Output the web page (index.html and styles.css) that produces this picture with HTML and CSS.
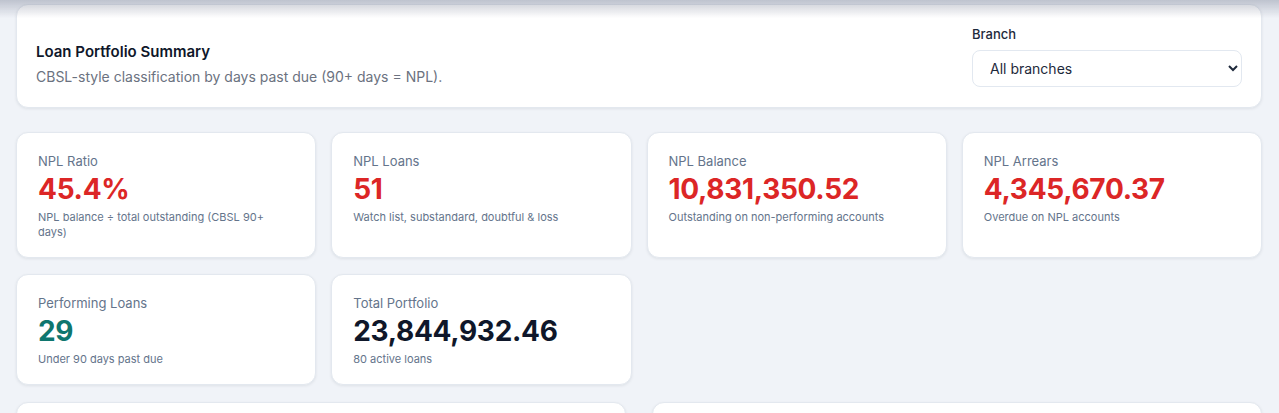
FILE: index.html
```html
<!DOCTYPE html>
<html lang="en">
<head>
    <meta charset="UTF-8">
    <meta name="viewport" content="width=device-width, initial-scale=1.0">
    <title>Loan Portfolio Summary</title>
    <link rel="stylesheet" href="styles.css">
</head>
<body>
    <!-- shadow cast by the sticky app header above the scrolled page -->
    <div class="header-shadow"></div>

    <main class="page">
        <section class="panel summary-head">
            <div class="summary-text">
                <h1>Loan Portfolio Summary</h1>
                <p>CBSL-style classification by days past due (90+ days = NPL).</p>
            </div>
            <div class="branch-filter">
                <label for="branch">Branch</label>
                <select id="branch">
                    <option>All branches</option>
                    <option>Colombo</option>
                    <option>Kandy</option>
                    <option>Galle</option>
                </select>
            </div>
        </section>

        <section class="stats">
            <div class="panel stat">
                <div class="stat-label">NPL Ratio</div>
                <div class="stat-value red">45.4%</div>
                <div class="stat-note">NPL balance ÷ total outstanding (CBSL 90+ days)</div>
            </div>
            <div class="panel stat">
                <div class="stat-label">NPL Loans</div>
                <div class="stat-value red">51</div>
                <div class="stat-note">Watch list, substandard, doubtful &amp; loss</div>
            </div>
            <div class="panel stat">
                <div class="stat-label">NPL Balance</div>
                <div class="stat-value red">10,831,350.52</div>
                <div class="stat-note">Outstanding on non-performing accounts</div>
            </div>
            <div class="panel stat">
                <div class="stat-label">NPL Arrears</div>
                <div class="stat-value red">4,345,670.37</div>
                <div class="stat-note">Overdue on NPL accounts</div>
            </div>
            <div class="panel stat">
                <div class="stat-label">Performing Loans</div>
                <div class="stat-value green">29</div>
                <div class="stat-note">Under 90 days past due</div>
            </div>
            <div class="panel stat">
                <div class="stat-label">Total Portfolio</div>
                <div class="stat-value">23,844,932.46</div>
                <div class="stat-note">80 active loans</div>
            </div>
        </section>

        <section class="charts">
            <div class="panel chart"></div>
            <div class="panel chart"></div>
        </section>
    </main>
</body>
</html>
```

FILE: styles.css
```css
body {
    margin: 0;
    font-family: Inter, "Noto Sans", Arial, sans-serif;
    background-color: #f0f3f8;
    color: #0f172a;
}

.header-shadow {
    position: fixed;
    top: 0;
    left: 0;
    right: 0;
    height: 18px;
    background: linear-gradient(to bottom, rgba(110, 118, 140, 0.38), rgba(110, 118, 140, 0));
    pointer-events: none;
    z-index: 10;
}

.page {
    padding: 4px 17px 16px 16px;
}

.panel {
    background-color: #fff;
    border: 1px solid #e3e8ef;
    border-radius: 12px;
    box-shadow: 0 1px 3px rgba(15, 23, 42, 0.08);
    box-sizing: border-box;
}

/* Header card */
.summary-head {
    display: flex;
    justify-content: space-between;
    align-items: flex-end;
    padding: 19px 19px 20px 19px;
    margin-bottom: 24px;
}

.summary-text h1 {
    margin: 0 0 4px;
    font-size: 15px;
    line-height: 22px;
    font-weight: 600;
    color: #0f172a;
}

.summary-text p {
    margin: 0;
    font-size: 14px;
    line-height: 20px;
    color: #6b7280;
}

.branch-filter {
    display: flex;
    flex-direction: column;
    width: 270px;
}

.branch-filter label {
    font-size: 13px;
    line-height: 20px;
    font-weight: 500;
    color: #1e293b;
    margin-bottom: 6px;
}

.branch-filter select {
    height: 37px;
    padding: 0 10px 0 13px;
    font-family: inherit;
    font-size: 14px;
    color: #1e293b;
    background-color: #fff;
    border: 1px solid #e2e8f0;
    border-radius: 8px;
}

/* Stat cards */
.stats {
    display: grid;
    grid-template-columns: repeat(4, 1fr);
    gap: 16px 15px;
}

.stat {
    padding: 21px 21px 17px;
}

.stat-label {
    font-size: 13px;
    line-height: 14px;
    color: #64748b;
}

.stat-value {
    margin-top: 4px;
    font-size: 28px;
    line-height: 34px;
    font-weight: 700;
    letter-spacing: -0.3px;
    color: #0f172a;
}

.stat-value.red {
    color: #dc2626;
}

.stat-value.green {
    color: #0f766e;
}

.stat-note {
    margin-top: 4px;
    font-size: 11px;
    line-height: 15px;
    color: #64748b;
}

/* Lower panels (cut off by the viewport) */
.charts {
    display: grid;
    grid-template-columns: 1fr 1fr;
    gap: 26px;
    margin-top: 17px;
}

.chart {
    min-height: 260px;
}
```
